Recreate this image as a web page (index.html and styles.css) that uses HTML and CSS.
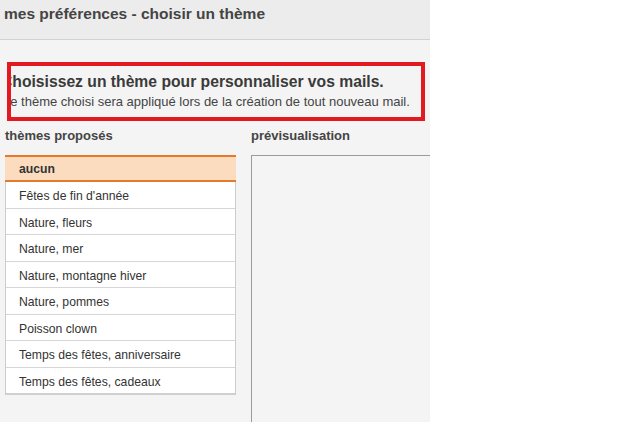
FILE: index.html
```html
<!DOCTYPE html>
<html lang="fr">
<head>
<meta charset="utf-8">
<title>mes préférences - choisir un thème</title>
<link rel="stylesheet" href="styles.css">
</head>
<body>
<div class="panel">
  <div class="header">mes préférences - choisir un thème</div>
  <div class="intro">
    <div class="intro-clip">
      <div class="intro-title">Choisissez un thème pour personnaliser vos mails.</div>
      <div class="intro-text">Le thème choisi sera appliqué lors de la création de tout nouveau mail.</div>
    </div>
    <div class="highlight"></div>
  </div>
  <div class="columns">
    <div class="col-list">
      <div class="col-label">thèmes proposés</div>
      <ul class="theme-list">
        <li class="theme selected">aucun</li>
        <li class="theme">Fêtes de fin d'année</li>
        <li class="theme">Nature, fleurs</li>
        <li class="theme">Nature, mer</li>
        <li class="theme">Nature, montagne hiver</li>
        <li class="theme">Nature, pommes</li>
        <li class="theme">Poisson clown</li>
        <li class="theme">Temps des fêtes, anniversaire</li>
        <li class="theme last">Temps des fêtes, cadeaux</li>
      </ul>
    </div>
    <div class="col-preview">
      <div class="col-label">prévisualisation</div>
      <div class="preview-box"></div>
    </div>
  </div>
</div>
</body>
</html>
```

FILE: styles.css
```css
html, body {
  margin: 0;
  padding: 0;
  background: #ffffff;
}
body {
  font-family: "Liberation Sans", Arial, sans-serif;
  color: #333333;
}
.panel {
  width: 430px;
  height: 422px;
  background: #f4f4f4;
  overflow: hidden;
}
.header {
  height: 34px;
  padding: 5px 0 0 4px;
  background: #ececec;
  border-bottom: 1px solid #d2d2d2;
  font-size: 15.5px;
  font-weight: bold;
  line-height: 17px;
  color: #444444;
}
.intro {
  position: relative;
  padding: 32px 0 0 0;
}
.intro-clip {
  margin-left: 8px;
  overflow: hidden;
}
.intro-title {
  margin-left: -7px;
  font-size: 15.7px;
  font-weight: bold;
  line-height: 20px;
  color: #3a3a3a;
  white-space: nowrap;
}
.intro-text {
  margin: 2px 0 0 -5px;
  font-size: 13px;
  line-height: 16px;
  color: #444444;
  white-space: nowrap;
}
.highlight {
  position: absolute;
  left: 7px;
  top: 22px;
  width: 418px;
  height: 59px;
  box-sizing: border-box;
  border: 4px solid #e3191f;
}
.columns {
  display: flex;
  margin-top: 18px;
  padding-left: 5px;
}
.col-list {
  width: 231px;
  flex: none;
}
.col-preview {
  margin-left: 15px;
  flex: 1;
}
.col-label {
  font-size: 13px;
  font-weight: bold;
  line-height: 16px;
  color: #444444;
  margin-bottom: 11px;
}
.theme-list {
  list-style: none;
  margin: 0;
  padding: 0;
  background: #ffffff;
  border-left: 1px solid #cccccc;
  border-right: 1px solid #cccccc;
  border-bottom: 2px solid #cfcfcf;
}
.theme {
  height: 21.5px;
  padding-top: 4px;
  line-height: 20px;
  padding-left: 13px;
  font-size: 12.2px;
  color: #333333;
  border-bottom: 1px solid #d6d6d6;
}
.theme.last {
  border-bottom: none;
}
.theme.selected {
  height: 20px;
  padding-top: 3px;
  line-height: 18px;
  background: #fcdcbf;
  border-top: 2px solid #e57a2b;
  border-bottom: 2px solid #e57a2b;
  font-weight: bold;
  margin: 0 -1px;
  padding-left: 14px;
}
.preview-box {
  height: 300px;
  border-top: 1px solid #9a9a9a;
  border-left: 1px solid #9a9a9a;
  background: #f4f4f4;
}
```
